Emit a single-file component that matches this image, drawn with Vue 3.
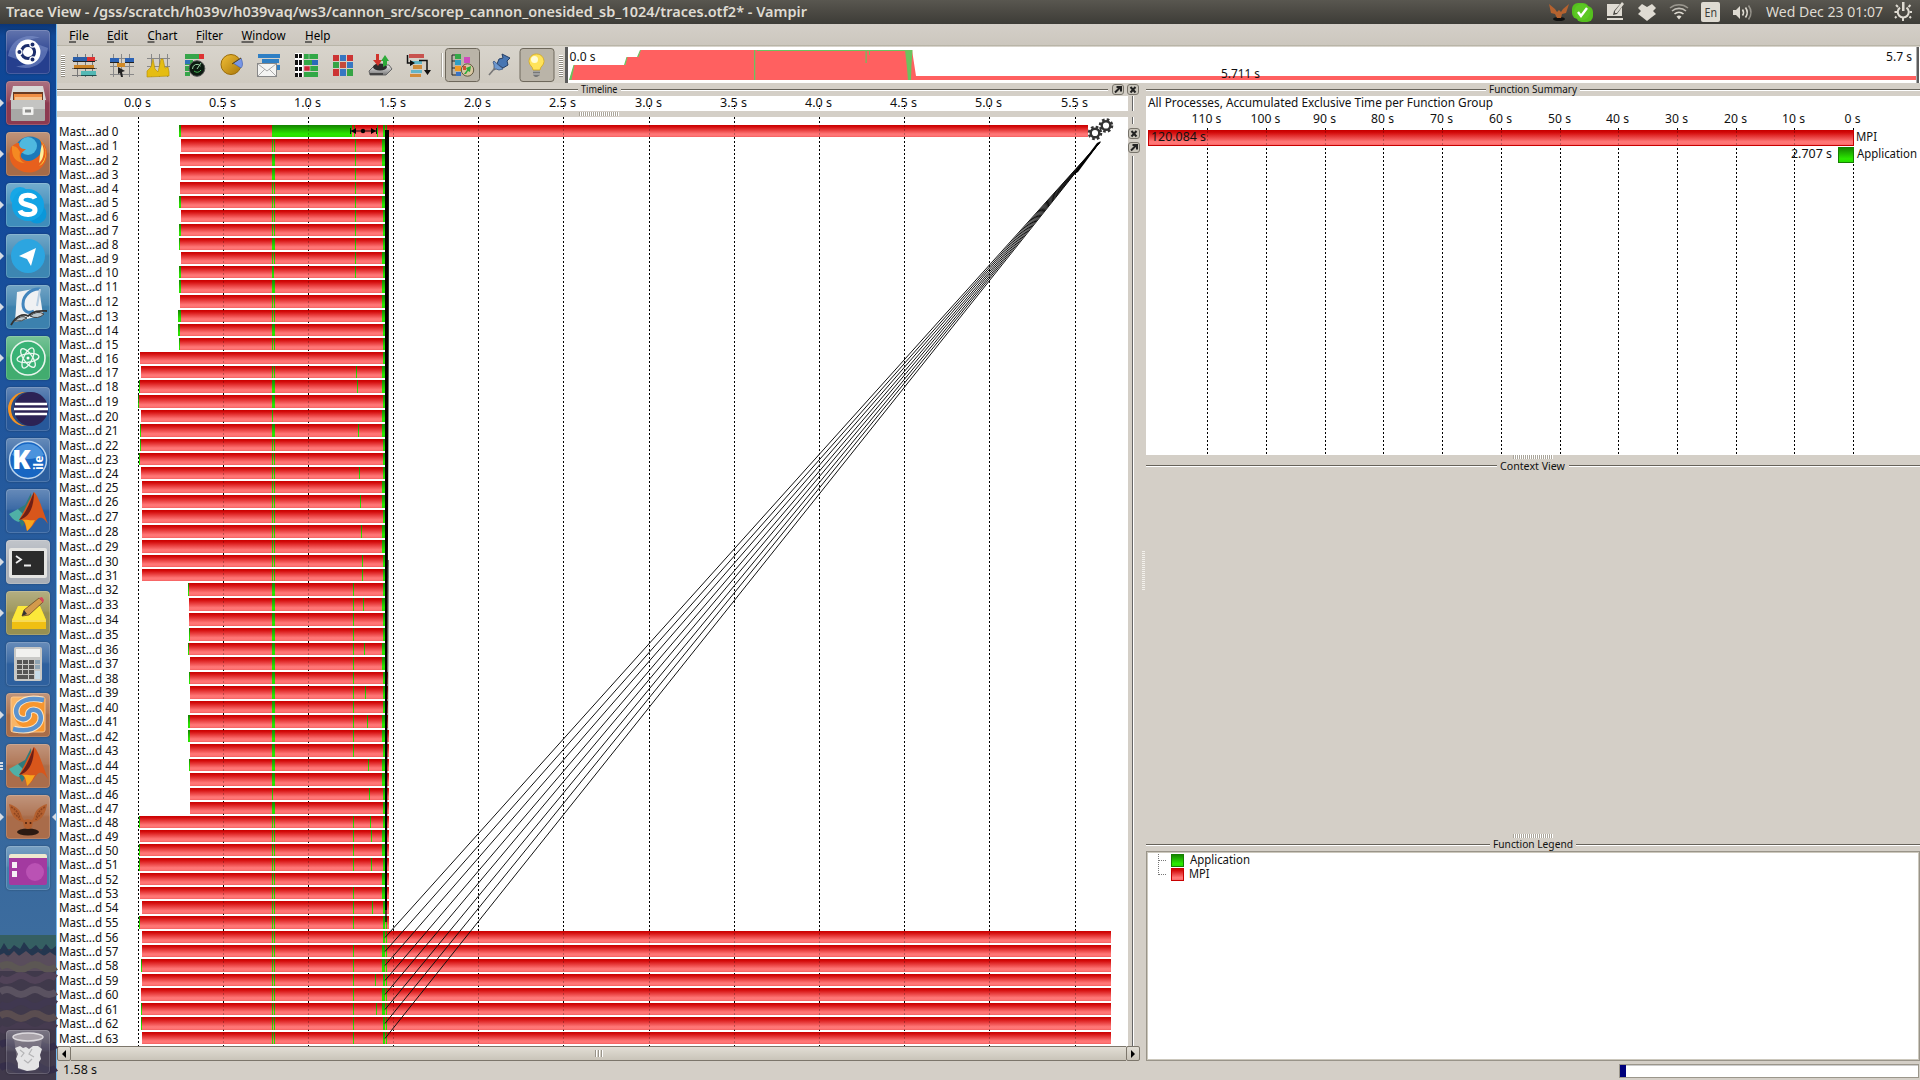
<script setup>
const tops = [
  125, 139, 154, 168, 182, 196, 210, 224, 238, 252, 266, 280, 295, 310, 324, 338,
  352, 366, 380, 395, 410, 424, 439, 453, 467, 481, 495, 510, 525, 540, 555, 569,
  583, 598, 613, 628, 643, 657, 672, 686, 701, 715, 730, 744, 759, 773, 788, 802,
  816, 830, 844, 858, 873, 887, 901, 916, 931, 945, 959, 974, 988, 1003, 1017, 1032, 1046
]
// where each bar begins, and how many leading pixels belong to the application
const starts = [
  [179, 2], [181], [180], [181], [180], [179, 2], [181], [179, 2], [179, 1], [181], [179, 2], [179, 2], [180], [178, 3], [178, 2], [179, 1],
  [140], [141], [139, 1], [138, 1], [141], [140, 1], [140, 1], [139, 1], [141], [142], [142], [142], [142], [142], [142], [142],
  [188, 1], [189], [189], [189, 1], [188, 1], [190], [189, 1], [190], [190], [188, 2], [188, 2], [190], [189, 1], [190], [190], [190],
  [139, 1], [140], [139, 1], [139, 1], [140], [140], [142], [139, 1], [142], [142], [141, 1], [142], [141], [141, 1], [141, 1], [142]
]
const solid = new Set([2, 3, 8, 11, 14, 18, 19, 21, 32, 33, 34, 35, 36, 37, 38, 39, 40, 41, 42, 43, 44, 45, 47])
const late = new Set([1, 2, 5, 9, 11, 12, 13, 17, 18, 20, 21, 25, 26, 28, 29, 33, 36, 37, 41, 42, 44, 45, 49, 50, 52, 53, 57, 58, 60, 61])
const thin = {
  17: 356, 18: 357, 21: 358, 24: 359, 26: 360, 28: 361, 30: 362, 31: 362, 33: 363, 36: 364, 39: 365,
  41: 367, 44: 368, 46: 369, 48: 370, 49: 371, 51: 371, 54: 372, 59: 375, 61: 376
}
const no353 = new Set([44, 45, 46, 47, 52, 56])
const rows = starts.map(([x, lead = 0], i) => {
  const end = i === 0 ? 1088 : i < 38 ? 386 : i < 42 ? 388 : i < 56 ? 389 : 1111
  const g = []
  if (lead) g.push([x, lead])
  if (i === 0) g.push([272, 80], [354, 1], [377, 1], [383, 2], [386, 1])
  else {
    if (solid.has(i)) g.push([272, 3])
    else if (i === 10) g.push([272, 2])
    else if (i === 20 || i === 46) g.push([272, 1])
    else if (i !== 16) g.push([272, 1], [274, 1])
    if (i < 11) g.push([355, 1])
    if (i > 31 && !no353.has(i)) g.push([353, 1])
    if (thin[i]) g.push([thin[i], 1])
    g.push(late.has(i) ? [382, 3] : [383, 2])
    if (i > 54) g.push([386, 1])
  }
  return { i, x, end, y: tops[i], h: tops[i + 1] - tops[i] - 2, g, name: i < 10 ? `Mast...ad ${i}` : `Mast...d ${i}` }
})
const grid = [138, 223, 308, 393, 478, 563, 649, 734, 819, 904, 989, 1075].map((x, i) => ({ x, label: `${(i / 2).toFixed(1)} s` }))
const sumGrid = Array.from({ length: 12 }, (_, i) => ({ x: Math.round(1853 - 58.7 * i), label: `${i * 10} s` }))
const messages = rows.slice(56)
const menus = [['File', 69, 20], ['Edit', 107, 21], ['Chart', 147.5, 30], ['Filter', 196, 27], ['Window', 241.5, 44], ['Help', 305, 25.5]]
</script>

<template>
  <div class="desktop">
    <header class="titlebar">
      <svg width="1920" height="24" viewBox="0 0 1920 24">
        <text x="6" y="17" class="wt" textLength="801" lengthAdjust="spacingAndGlyphs">Trace View - /gss/scratch/h039v/h039vaq/ws3/cannon_src/scorep_cannon_onesided_sb_1024/traces.otf2* - Vampir</text>
        <g>
          <ellipse cx="1559" cy="19" rx="6" ry="2" fill="#111" />
          <path d="M1549 4l6 5 2 3 2-2 2 2 2-3 6-5-3 9-4 1-1 4-4 0-2-4-4-1z" fill="#b5622f" />
        </g>
        <rect x="1572" y="3" width="17" height="16" rx="6" fill="#55c01e" />
        <rect x="1576" y="6" width="17" height="16" rx="6" fill="#55c01e" />
        <circle cx="1582" cy="12" r="8" fill="#5cc824" />
        <path d="M1578 12l3 4 6-8" fill="none" stroke="#fff" stroke-width="2.4" />
        <g fill="#dfdbd2">
          <path d="M1607 4h13l-6 7-1 4 4-1 5-7v9h-15z" />
          <path d="M1622 2l2 2-7 9-2 0 0-2zM1607 18h16v2h-16z" />
          <path d="M1642 4l5 3 5-3 4 4-3 3 3 3-4 3-5 4-5-4-4-3 3-3-3-3z" />
          <path d="M1676.500 16.500a4 4 0 0 1 5 0l-2.500 3z" />
          <rect x="1701" y="2" width="19" height="20" rx="2" />
          <path d="M1733 10h3l4-4v13l-4-4h-3z" />
          <path d="M1902 2h2.500v9h-2.500z" />
        </g>
        <g fill="none" stroke="#dfdbd2" stroke-width="1.600">
          <path d="M1674.500 14a7 7 0 0 1 9 0" />
          <path d="M1672 11a10.500 10.500 0 0 1 14 0" opacity=".8" />
          <path d="M1670 8a14 14 0 0 1 18 0" opacity=".5" />
          <path d="M1742.500 9.500q2 3 0 6M1745.500 7.500q3.500 5 0 10" />
          <path d="M1748.500 5.500q5 7 0 14" opacity=".5" />
          <path d="M1900 7.600a5.500 5.500 0 1 0 6.500 0" stroke-width="2" />
          <path d="M1903 18v3M1896.500 16.500l-1.500 1.500M1909.500 16.500l1.500 1.500M1897 12h-2.500M1909.500 12h2.500M1898 7l-2-2M1908.500 7l2-2" stroke-width="2" />
        </g>
        <text x="1704.500" y="17" font-size="13" fill="#3c3b37" textLength="12.500" lengthAdjust="spacingAndGlyphs">En</text>
        <text x="1766" y="17" font-size="14.500" fill="#dfdbd2" textLength="117" lengthAdjust="spacingAndGlyphs">Wed Dec 23 01:07</text>
      </svg>
    </header>

    <div class="below">
      <nav class="launcher">
        <div class="tile" style="--c: #263f8e">
          <svg viewBox="0 0 44 44">
            <path d="M2 26C4 10 20 2 34 8 22 8 12 14 13 30M42 18C40 34 24 42 10 36 22 36 32 30 31 14" fill="#7f93cc" opacity=".55" />
            <circle cx="22" cy="22" r="12.500" fill="#fff" />
            <circle cx="22" cy="22" r="6.600" fill="none" stroke="#1c2d6b" stroke-width="3" />
            <g fill="#1c2d6b" stroke="#fff" stroke-width="1.200"><circle cx="13.400" cy="22" r="2.600" /><circle cx="26.500" cy="14.500" r="2.600" /><circle cx="26.500" cy="29.500" r="2.600" /></g>
          </svg>
        </div>
        <div class="tile run" style="--c: #8c3a50">
          <svg viewBox="0 0 44 44">
            <path d="M7 5h30l3 14H4z" fill="#d9d9d7" /><path d="M7 11h30v9H7z" fill="#6a3a22" />
            <path d="M8 13h28v7H8z" fill="#ef8e45" /><path d="M9 16h27v3H9z" fill="#f6c08a" />
            <rect x="5" y="19" width="34" height="21" rx="1" fill="#a8a8a6" /><rect x="5" y="19" width="34" height="9" fill="#c4c4c2" />
            <rect x="16.500" y="26" width="11" height="8" rx="1" fill="#f2f2f0" /><rect x="19" y="28.500" width="6" height="3" fill="#8a8a88" />
          </svg>
        </div>
        <div class="tile run" style="--c: #a66b48">
          <svg viewBox="0 0 44 44">
            <circle cx="24" cy="20" r="15.500" fill="#1c79b8" /><circle cx="22" cy="14" r="9" fill="#4fb9df" />
            <path d="M5 15c3-2 4-4 8-4 0 4 2 6 7 6-3 3-6 4-5 8 3 5 10 5 15 1 6-3 7-12 4-18 9 6 9 20 2 27-10 10-26 5-31-5-2-5-2-10 0-15z" fill="#e7601d" />
            <path d="M34 8c8 8 7 20-1 26 9-3 9-20 1-26z" fill="#ffd33a" /><path d="M36 12c3 6 2 15-3 19 1-6 1-12 3-19z" fill="#fff09a" />
            <path d="M6 14c4 0 6 2 8 6-1 6 0 9 5 11-8 0-14-5-13-17z" fill="#f58a22" />
          </svg>
        </div>
        <div class="tile run" style="--c: #3f8dbb">
          <svg viewBox="0 0 44 44">
            <circle cx="14" cy="14" r="10" fill="#17a7e6" /><circle cx="31" cy="31" r="9.500" fill="#0a97da" /><circle cx="22" cy="22" r="16" fill="#12a3e4" />
            <path d="M29 15.500c-2-4-13-5-14 1-1 7 14 4 14 10.500 0 6-13 6-15 .5" fill="none" stroke="#fff" stroke-width="5" />
          </svg>
        </div>
        <div class="tile run" style="--c: #3d86b2">
          <svg viewBox="0 0 44 44"><circle cx="22" cy="22" r="17" fill="#2ca5e0" /><path d="M30 14l-17 8 8 3 4 7z" fill="#fff" /></svg>
        </div>
        <div class="tile run" style="--c: #3c81ae">
          <svg viewBox="0 0 44 44">
            <path d="M11 7l22-4 4 27-28 7z" fill="#eff1f3" />
            <path d="M34 4c-8-1-17 6-17 15 0 8 6 10 11 7" fill="none" stroke="#4285bd" stroke-width="3" /><path d="M34 4l-3 17" stroke="#b9cfe2" stroke-width="2" />
            <path d="M5 40c5-9 12-12 17-9 7-6 12-5 19-5" fill="none" stroke="#333" stroke-width="1.800" /><path d="M9 36q6-7 12-3-5 4-12 3zM24 31q7-6 14-2-6 6-14 2z" fill="#bbc6cc" stroke="#444" />
          </svg>
        </div>
        <div class="tile run" style="--c: #42ac6f">
          <svg viewBox="0 0 44 44">
            <circle cx="22" cy="22" r="17" fill="#39b275" stroke="#e8f5ec" stroke-width="1.600" />
            <g fill="none" stroke="#eaf7ee" stroke-width="1.300"><ellipse cx="22" cy="22" rx="11" ry="4.300" transform="rotate(-8 22 22)" /><ellipse cx="22" cy="22" rx="11" ry="4.300" transform="rotate(54 22 22)" /><ellipse cx="22" cy="22" rx="11" ry="4.300" transform="rotate(115 22 22)" /></g>
            <circle cx="22" cy="22" r="1.500" fill="#fff" />
          </svg>
        </div>
        <div class="tile" style="--c: #27589a">
          <svg viewBox="0 0 44 44">
            <circle cx="19" cy="22" r="17" fill="#f79421" /><circle cx="22" cy="22" r="17" fill="#2a4b80" /><circle cx="25" cy="22" r="17" fill="#2c2255" />
            <path d="M9 17h32M8 22h34M9 27h32" stroke="#fff" stroke-width="2.400" />
          </svg>
        </div>
        <div class="tile" style="--c: #2c5f9f">
          <svg viewBox="0 0 44 44">
            <circle cx="22" cy="22" r="18.500" fill="#1766c2" stroke="#bcd5ee" stroke-width="1.500" /><path d="M6 17a17 17 0 0 1 32 0q-16 8-32 0z" fill="#4b93dd" />
            <text x="6" y="31" font-size="27" font-weight="900" fill="#fff">K</text><text transform="translate(37 32) rotate(-90)" font-size="12" font-weight="700" fill="#fff">ile</text>
          </svg>
        </div>
        <div class="tile" style="--c: #2c5e9e">
          <svg viewBox="0 0 44 44"><path d="M3 25l9-5 8 6-5 7q-6 1-12-8z" fill="#4fb0a6" /><path d="M12 20l7-4 6-12 1 20-10 14-3-6 6-5z" fill="#2f7a7b" /><path d="M28 3c-5 8-8 16-15 28 5-2 6 4 8 11 6-4 9-12 12-13 4-1 6 2 9 6C37 23 33 7 28 3z" fill="#d8561b" /><path d="M28 3c-4 9-6 18-15 28 8-2 15-9 15-28z" fill="#6e1f16" /><path d="M16 31c3 0 4 5 5 11 5-4 6-8 8-11-5 1-8-1-13 0z" fill="#f7a51d" /></svg>
        </div>
        <div class="tile run" style="--c: #a9aeb6">
          <svg viewBox="0 0 44 44"><rect x="3" y="8" width="38" height="30" rx="2" fill="#e4e4e2" /><rect x="6" y="11" width="32" height="24" fill="#2b2b2b" /><path d="M10 16l5 3.500-5 3.500M18 25.500h7" fill="none" stroke="#eee" stroke-width="1.800" /></svg>
        </div>
        <div class="tile run" style="--c: #979052">
          <svg viewBox="0 0 44 44"><path d="M6 29l6-14h22l6 14v9H6z" fill="#f0bf13" /><path d="M6 29l6-14h22l6 14z" fill="#fce83a" /><path d="M6 30h34" stroke="#fff59a" /><path d="M16 25l2-6L33 7l4 4-14 13z" fill="#d39a4c" stroke="#6b4a23" stroke-width=".8" /><path d="M33 7l3-1 2 3-1 3z" fill="#d7465a" /><path d="M16 25l2-6 3 4z" fill="#333" /></svg>
        </div>
        <div class="tile" style="--c: #2e609e">
          <svg viewBox="0 0 44 44"><rect x="8" y="5" width="28" height="34" rx="2" fill="#c8c8c6" /><rect x="10" y="7" width="24" height="8" fill="#f1f1ef" /><g fill="#555"><rect v-for="k in 9" :key="k" :x="11 + ((k - 1) % 3) * 6" :y="18 + Math.floor((k - 1) / 3) * 5" width="5" height="4" /><rect x="11" y="33" width="11" height="4" /><rect x="23" y="33" width="5" height="4" /></g><path d="M29 18h5v4h-5zM29 23h5v4h-5z" fill="#8fa5b5" /><path d="M29 29h5v8h-5z" fill="#c7dbe8" /></svg>
        </div>
        <div class="tile run" style="--c: #a86d49">
          <svg viewBox="0 0 44 44"><rect x="5" y="4" width="34" height="35" rx="2" fill="#f6962f" stroke="#f8c48b" /><path d="M5 4h11C4 12 6 30 17 34c-6 1-9 3-8 5H5z" fill="#fbc98c" opacity=".6" /><g fill="none" stroke="#fbe3c2" stroke-width="6.500"><path d="M8 36c8 2 18 2 24-4 5-6 3-14-3-15-5-1-8 3-6 6" /><path d="M37 7c-9-2-18-2-24 4-5 6-3 14 3 15 5 1 8-3 6-6" /></g><g fill="none" stroke="#5b93cf" stroke-width="4.500"><path d="M7 36c9 2 19 2 25-4 5-6 3-14-3-15-5-1-8 3-6 6" /><path d="M38 7c-10-2-19-2-25 4-5 6-3 14 3 15 5 1 8-3 6-6" /></g></svg>
        </div>
        <div class="tile run many" style="--c: #aa6d4b">
          <svg viewBox="0 0 44 44"><path d="M3 25l9-5 8 6-5 7q-6 1-12-8z" fill="#4fb0a6" /><path d="M12 20l7-4 6-12 1 20-10 14-3-6 6-5z" fill="#2f7a7b" /><path d="M28 3c-5 8-8 16-15 28 5-2 6 4 8 11 6-4 9-12 12-13 4-1 6 2 9 6C37 23 33 7 28 3z" fill="#d8561b" /><path d="M28 3c-4 9-6 18-15 28 8-2 15-9 15-28z" fill="#6e1f16" /><path d="M16 31c3 0 4 5 5 11 5-4 6-8 8-11-5 1-8-1-13 0z" fill="#f7a51d" /></svg>
        </div>
        <div class="tile run focus" style="--c: #a96c4a">
          <svg viewBox="0 0 44 44"><ellipse cx="22" cy="37" rx="11" ry="3.500" fill="#2b1a12" /><path d="M3 9c7 2 12 6 13 13l2 3 4-1 4 1 2-3c1-7 6-11 13-13-1 8-4 14-10 17l-4 1-1 5q-4 4-8 0l-1-5-4-1C7 23 4 17 3 9z" fill="#b4602f" /><path d="M5 12q8 4 9 13M39 12q-8 4-9 13M8 18l5 5M36 18l-5 5" stroke="#8d4520" stroke-dasharray="2 1" stroke-width="1.500" fill="none" /><circle cx="20" cy="28" r="1" fill="#4a1f0c" /><circle cx="24.500" cy="28" r="1" fill="#4a1f0c" /></svg>
        </div>
        <div class="tile" style="--c: #457cab">
          <svg viewBox="0 0 44 44"><rect x="3" y="8" width="38" height="31" rx="2" fill="#a33aa0" /><circle cx="29" cy="26" r="9" fill="#c963c2" opacity=".6" /><path d="M3 12V10q0-2 2-2h34q2 0 2 2v2z" fill="#eee9cf" /><path d="M6 16h5v6H6zM6 25h5v6H6z" fill="#f5f0f5" /></svg>
        </div>
        <div class="tile trash">
          <svg viewBox="0 0 44 44"><path d="M8 8h28l-4 31q-10 3-20 0z" fill="#8e8791" opacity=".6" /><ellipse cx="22" cy="7" rx="15" ry="4" fill="#a9a3aa" stroke="#dedbdf" stroke-width="1.500" /><path d="M9 18l5-2 3 2 3-1 3 2 4-3 5 0 4 3-2 6 1 4-2 3v5l-4 3-8 1-9-3v-5l-2-4 2-5z" fill="#e4e4e5" /><path d="M14 20l4 3-3 4M26 19l-3 5 5 3M18 30l4 3 4-4" stroke="#b4b4b6" fill="none" stroke-width="1.200" /></svg>
        </div>
        <svg class="ground" width="56" height="145" viewBox="0 0 56 145">
          <rect width="56" height="145" fill="#40394b" />
          <path d="M0 0h56v14H0z" fill="#355f62" />
          <path d="M0 15l4-7 5 8 5-6 6 4 4-7 6 8 6-5 5 6 5-7 5 6 5-4v9H0z" fill="#24364f" />
          <path d="M0 20l4-2 4 4 6-6 5 5 7-5 6 5 6-4 6 4 6-4 6 4V36H0z" fill="#594d5c" />
          <g fill="none" stroke-width="7"><path d="M0 32q7-5 14 0t14 0 14 0 14 0" stroke="#5c5754" /><path d="M0 43q7 5 14 0t14 0 14 0 14 0" stroke="#514358" /><path d="M0 57q7-5 14 0t14 0 14 0 14 0" stroke="#5a5260" /><path d="M0 69q7 5 14 0t14 0 14 0 14 0" stroke="#403850" /><path d="M0 81q7-5 14 0t14 0 14 0 14 0" stroke="#5a4d50" /><path d="M0 93q7 5 14 0t14 0 14 0 14 0" stroke="#463b50" /><path d="M0 110q7-5 14 0t14 0 14 0 14 0M0 133q7-5 14 0t14 0 14 0 14 0" stroke="#352e4a" /></g>
        </svg>
      </nav>

      <main class="window">
        <div class="menubar">
          <svg width="1863" height="22" viewBox="57 24 1863 22">
            <g v-for="[m, x, w] in menus" :key="m">
              <text :x="x" y="40" font-size="12.500" :textLength="w" lengthAdjust="spacingAndGlyphs">{{ m }}</text>
              <rect :x="x" y="41.500" :width="m === 'Window' ? 12 : 7" height="1" />
            </g>
          </svg>
        </div>
        <div class="toolbar">
          <svg width="1863" height="37" viewBox="57 46 1863 37">
            <defs>
              <pattern id="hatch" width="4" height="2" patternUnits="userSpaceOnUse"><rect width="4" height="1" fill="#8e8a80" /><rect y="1" width="4" height="1" fill="#fff" /></pattern>
              <linearGradient id="gold" x1="0" y1="0" x2="1" y2="1"><stop offset="0" stop-color="#f2bf38" /><stop offset="1" stop-color="#a87708" /></linearGradient>
              <linearGradient id="steel" x1="0" y1="0" x2="0" y2="1"><stop offset="0" stop-color="#eee" /><stop offset="1" stop-color="#777" /></linearGradient>
            </defs>
            <rect x="61" y="55" width="4" height="22" fill="url(#hatch)" /><rect x="559" y="55" width="4" height="22" fill="url(#hatch)" />
            <!-- master timeline -->
            <g><path d="M77.500 54v23M85.500 54v23M92.500 54v23M72 60.500h25M72 68.500h25M72 75.500h25" stroke="#777" fill="none" /><path d="M73 57h21v4H73z" fill="#2c5fa8" /><path d="M87 57h8v4h-8z" fill="#d33" /><path d="M73 61h22v1H73z" fill="#222" /><path d="M74 65h20v3H74z" fill="#c98226" /><path d="M74 68h21v1H74z" fill="#3a2a14" /><path d="M81 71h15v4H81z" fill="#53b8b4" /><path d="M81 75h15v1H81z" fill="#1d4d4b" /></g>
            <!-- process timeline -->
            <g><path d="M113.500 54v23M121.500 54v23M129.500 54v23M110 58.500h24M110 66.500h24M110 74.500h24" stroke="#888" fill="none" /><path d="M110 58h9v4h-9zM125 58h9v4h-9z" fill="#2c63b5" /><path d="M110 62h9v1h-9zM125 62h9v1h-9z" fill="#222" /><path d="M117 63h8v4h-8z" fill="#d08a28" /><path d="M118 67l7 4-3 1 1 5h-2l-1-4-2 1z" fill="#222" /></g>
            <!-- counter timeline -->
            <g><path d="M151.500 54v23M159.500 54v23M167.500 54v23M147 58.500h23M147 66.500h23" stroke="#888" fill="none" /><path d="M147 77V71l4-4 2-8 2 10 3 3 3-13 2 0 2 9 3-1 1 5v4z" fill="#e5bd12" stroke="#b18c00" stroke-width=".6" /></g>
            <!-- performance radar -->
            <g><path d="M185 54h19v5h-19zM185 60h8v5h-8zM185 66h5v5h-5zM185 72h5v4h-5z" fill="#36a54a" /><path d="M199 54h5v5h-5z" fill="#d33" /><path d="M185 60h5v4h-5z" fill="#2f72b8" /><circle cx="197" cy="68.500" r="7.800" fill="#0c1b10" stroke="#555" /><path d="M197 69l4-6M192.500 69a4.500 4.500 0 0 1 8-3" stroke="#9fd6a8" fill="none" /><path d="M194 71q4 3 7-1" stroke="#44b653" fill="none" /></g>
            <!-- function summary -->
            <g><circle cx="231" cy="64.500" r="10" fill="url(#gold)" stroke="#9a6b07" /><path d="M233 63l8-5q3 7 0 10z" fill="#7796e6" stroke="#4463b5" stroke-width=".7" /><path d="M232 64l9-6" stroke="#634500" /></g>
            <!-- message summary -->
            <g><path d="M258 54h22v4h-22zM262 59h17v4h-17zM262 65h18v5h-18z" fill="#2f7fc4" /><rect x="257.500" y="63.500" width="19" height="13" fill="#f4f4f2" stroke="#888" /><path d="M258 64l9 7 9-7M258 76l7-7M276 76l-7-7" fill="none" stroke="#aaa" /></g>
            <!-- process summary -->
            <g><path d="M295 53h8v24h-8z" fill="#fff" /><path d="M295 54h3v4h-3zM299 54h3v4h-3zM295 60h3v5h-3zM299 60h3v5h-3zM295 67h3v4h-3zM299 67h3v4h-3zM295 73h3v4h-3zM299 73h3v4h-3z" fill="#111" /><path d="M304 54h14v5h-14zM304 60h14v5h-14zM304 66h14v5h-14zM304 72h14v5h-14z" fill="#32a846" /><path d="M309 54v5M304 66h6v5h-6z" fill="#c23" stroke="#ddd" stroke-width=".5" /><path d="M312 60h6v5h-6z" fill="#2a6ab8" /></g>
            <!-- communication matrix -->
            <g><path d="M333 55h6v6h-6zM347 55h6v6h-6zM333 69h6v7h-6z" fill="#cc3434" /><path d="M340 55h6v6h-6zM347 62h6v6h-6zM340 69h6v7h-6z" fill="#3676c2" /><path d="M333 62h6v6h-6zM347 69h6v7h-6z" fill="#35a445" /><path d="M340 62h6v6h-6z" fill="#c44a3c" /></g>
            <!-- I/O summary -->
            <g><path d="M369 71l6-6h14l3 4-6 6h-16z" fill="url(#steel)" stroke="#666" /><ellipse cx="380" cy="67" rx="7" ry="3.500" fill="#2c2c2c" /><path d="M376 54v6h-3l5 6 4-6h-3v-6z" fill="#d0342c" /><path d="M383 67v-6h-2l4-6 4 6h-2v4z" fill="#2eab3a" /><path d="M370 73h13v2h-13z" fill="#444" /></g>
            <!-- call tree -->
            <g><path d="M409 54h15v4h-15z" fill="#c8524e" /><path d="M410 61h12v3h-12z" fill="#61b5c6" /><path d="M413 65h9v4h-9z" fill="#cf8c3c" /><path d="M411 70h11v3h-11z" fill="#62b5c9" /><path d="M410 74h11v3h-11z" fill="#d28c3a" /><path d="M407.500 55v8h5M419 60.500h8v11" stroke="#111" fill="none" stroke-width="1.500" /><path d="M410 60l5 3-5 3zM424 70h7l-3.500 5z" fill="#111" /></g>
            <path d="M441.500 53v24" stroke="#aaa69c" /><path d="M442.500 53v24" stroke="#fff" />
            <rect x="445.500" y="48.500" width="34" height="33" rx="3" fill="#bab4a8" stroke="#6e685c" />
            <g><path d="M455 55h-3v20h4M452 61h4M452 68h4" stroke="#222" fill="none" /><path d="M455 54h6v5h-6z" fill="#33a847" /><path d="M455 60h6v5h-6z" fill="#2f9ec2" /><path d="M455 66h6v5h-6z" fill="#ef9b26" /><path d="M456 72h5v4h-5z" fill="#3a72c3" /><path d="M464 57h6v6h-6z" fill="#d04bbd" /><circle cx="467.500" cy="70" r="6.200" fill="#d9c7a2" stroke="#5f563e" /><path d="M464 74l3-4-1-2 5-2-1 6-2-1-2 3z" fill="#2ba838" /><path d="M463 66h3v4h-3z" fill="#c53" /></g>
            <g><path d="M502 54l8 4-3 3 1 4-5 3-6-4 2-5 4-1z" fill="#4876b2" stroke="#263f66" /><path d="M494 61l9 8-4 1-3-1-2 1 0-5-1-3z" fill="#6d98cf" stroke="#2f4b76" stroke-width=".7" /><path d="M495 68l-6 7" stroke="#777" stroke-width="1.600" /></g>
            <rect x="520" y="48.500" width="34" height="33" rx="3" fill="#bab4a8" stroke="#6e685c" />
            <g><path d="M533 69h7v6l-3 2h-2l-2-2z" fill="#777" /><path d="M533 71h7M533 74h7" stroke="#ccc" /><path d="M536.500 54c-5 0-7.500 4-7.500 7.500 0 4 4 5 4 8.500h7c0-3.500 4-4.500 4-8.500 0-3.500-2.500-7.500-7.500-7.500z" fill="#ffe35a" stroke="#d3a81c" stroke-width=".8" /><circle cx="534.500" cy="59.500" r="3.500" fill="#fffbd5" /></g>
            <!-- zoom overview -->
            <path d="M565 47h1355v36H565z" fill="#fff" /><path d="M565 47h3v36h-3zM1916.500 47h2.500v36h-2.500z" fill="#5c5c5c" />
            <path d="M569.500 80l4.500-15h51l2-8h11l2.500-7H912l4 26h1000v4z" fill="#ff6060" />
            <g fill="#6cc25e"><path d="M569 80l4.500-15h1l-3 15zM624 65l2.500-8h1l-2 8zM637 57l3-7h1l-2.500 7z" /><path d="M754 50h1.300v30H754zM757 50h152v1H757zM865.500 50h1.200v13h-1.200zM869 50h1v5h-1zM905 50h7.500l-1 15-.5 15h-3l-1-12z" /></g>
            <g class="t"><text x="569.500" y="61" textLength="26" lengthAdjust="spacingAndGlyphs">0.0 s</text><text x="1221" y="78" textLength="39" lengthAdjust="spacingAndGlyphs">5.711 s</text><text x="1886" y="61" textLength="26" lengthAdjust="spacingAndGlyphs">5.7 s</text></g>
          </svg>
        </div>

        <div class="docks">
          <section class="left">
            <div class="docktitle"><i class="lead"></i><svg width="37" height="13"><text x="0" y="10" textLength="36.500" lengthAdjust="spacingAndGlyphs">Timeline</text></svg><i></i>
              <svg width="30" height="13" viewBox="0 0 30 13"><g fill="#c9c5bb" stroke="#77736a"><rect x="1.500" y="1.500" width="11" height="10" rx="2.500" /><rect x="16.500" y="1.500" width="11" height="10" rx="2.500" /></g><path d="M4 9.500l5-5M5.500 4H10v4.500M19.500 4l5 5.500M24.500 4l-5 5.500" stroke="#222" stroke-width="2" fill="none" /></svg>
            </div>
            <div class="charts">
              <div class="plots">
                <svg class="ruler" width="1071" height="15" viewBox="57 96 1071 15">
                  <g v-for="g in grid" :key="g.x" class="t"><text :x="g.x - 0.5" y="107" text-anchor="middle" textLength="27" lengthAdjust="spacingAndGlyphs">{{ g.label }}</text><path :d="`M${g.x} 105h1v1h-1zM${g.x} 108h1v1h-1z`" /></g>
                </svg>
                <div class="split"><span class="grip"></span></div>
                <svg class="plot" width="1071" height="929" viewBox="57 117 1071 929">
                  <defs>
                    <linearGradient id="red" x1="0" y1="0" x2="0" y2="1"><stop offset="0" stop-color="#c80000" /><stop offset=".15" stop-color="#d40c0c" /><stop offset=".75" stop-color="#ff7777" /><stop offset=".88" stop-color="#ff7474" /><stop offset="1" stop-color="#f26060" /></linearGradient>
                    <linearGradient id="green" x1="0" y1="0" x2="0" y2="1"><stop offset="0" stop-color="#148000" /><stop offset=".75" stop-color="#2be800" /><stop offset="1" stop-color="#26dc00" /></linearGradient>
                  </defs>
                  <path v-for="g in grid" :key="g.x" :d="`M${g.x + 0.5} 117V1046`" class="grid" />
                  <g v-for="r in rows" :key="r.i" shape-rendering="crispEdges">
                    <rect :x="r.x" :y="r.y" :width="r.end - r.x" :height="r.h" fill="url(#red)" />
                    <rect v-for="([x, w], k) in r.g" :key="k" :x="x" :y="r.y" :width="w" :height="r.h" fill="url(#green)" />
                    <text class="t" x="59" :y="r.y + 11" textLength="59.500" lengthAdjust="spacingAndGlyphs">{{ r.name }}</text>
                  </g>
                  <path v-for="g in grid" :key="'o' + g.x" :d="`M${g.x + 0.5} 117V1046`" class="grid over" />
                  <path d="M385 130h4l-.2 200-1 260-.8 300v20h-2z" />
                  <path d="M385 908h2v14h-2z" opacity=".65" /><path d="M388 560l1 0-1 200z" opacity=".5" />
                  <path v-for="m in messages" :key="m.i" :d="`M385 ${m.y + 6.500}L1100 142`" stroke="#111" stroke-width="1" />
                  <path d="M1101 141l-4 2-24 32 5-3z" />
                  <path d="M351 131h25M350.500 128v6M376.500 128v6" stroke="#111" /><path d="M351 131l5-3v6zM376 131l-5-3v6z" /><circle cx="363" cy="131" r="2.200" />
                  <g fill="none" stroke="#333">
                    <circle cx="1095" cy="133" r="4.300" stroke-width="2.400" /><circle cx="1095" cy="133" r="6" stroke-width="2.600" stroke-dasharray="2.600 2.112" />
                    <circle cx="1106" cy="125.500" r="4.300" stroke-width="2.400" /><circle cx="1106" cy="125.500" r="6" stroke-width="2.600" stroke-dasharray="2.600 2.112" />
                  </g>
                </svg>
              </div>
              <svg width="18" height="950" viewBox="1128 96 18 950">
                <path d="M1132.500 96v15M1132.500 117v7M1132.500 156v890" stroke="#666" /><path d="M1133.500 96v15M1133.500 117v7M1133.500 156v890" stroke="#fff" />
                <g fill="#c9c5bb" stroke="#77736a"><rect x="1128.500" y="128.500" width="11" height="10" rx="2.500" /><rect x="1128.500" y="142.500" width="11" height="10" rx="2.500" /></g>
                <path d="M1131.500 131l5 5.500M1136.500 131l-5 5.500M1131 150.500l5-5M1132.500 145h4.500v4.500" stroke="#222" stroke-width="2" fill="none" />
                <path d="M1143.500 551v40" stroke="#f3f1ec" stroke-width="3" stroke-dasharray="1 1" />
              </svg>
            </div>
            <div class="scroll"><span class="btn"><svg width="6" height="8" viewBox="0 0 6 8"><path d="M5 0v8L1 4z" /></svg></span><span class="thumb"><u></u><u></u><u></u></span><span class="btn"><svg width="6" height="8" viewBox="0 0 6 8"><path d="M1 0v8l4-4z" /></svg></span></div>
          </section>

          <section class="right">
            <div class="docktitle"><i></i><svg width="88" height="13"><text x="0" y="10" textLength="88" lengthAdjust="spacingAndGlyphs">Function Summary</text></svg><i></i></div>
            <svg class="summary" width="774" height="359" viewBox="1146 96 774 359">
              <text class="t" x="1148" y="107" textLength="345" lengthAdjust="spacingAndGlyphs">All Processes, Accumulated Exclusive Time per Function Group</text>
              <g v-for="g in sumGrid" :key="g.x"><text class="t" :x="g.x - 0.5" y="123" text-anchor="middle">{{ g.label }}</text><path :d="`M${g.x + 0.5} 128V455`" class="grid" /></g>
              <rect x="1148.500" y="130.500" width="705" height="15" fill="url(#red)" stroke="#c80000" />
              <rect x="1838.500" y="147.500" width="15" height="15" fill="url(#green)" stroke="#148000" />
              <path v-for="g in sumGrid.slice(1)" :key="'s' + g.x" :d="`M${g.x + 0.5} 131V145`" class="grid over" />
              <g class="t"><text x="1151" y="141" textLength="55" lengthAdjust="spacingAndGlyphs">120.084 s</text><text x="1856" y="141" textLength="21" lengthAdjust="spacingAndGlyphs">MPI</text><text x="1791" y="158" textLength="41" lengthAdjust="spacingAndGlyphs">2.707 s</text><text x="1857" y="158" textLength="60" lengthAdjust="spacingAndGlyphs">Application</text></g>
            </svg>
            <div class="split small"><span class="grip"></span></div>
            <div class="docktitle"><i></i><svg width="66" height="13"><text x="0" y="10" textLength="65" lengthAdjust="spacingAndGlyphs">Context View</text></svg><i></i></div>
            <div class="context"></div>
            <div class="split small"><span class="grip"></span></div>
            <div class="docktitle"><i></i><svg width="80" height="13"><text x="0" y="10" textLength="80" lengthAdjust="spacingAndGlyphs">Function Legend</text></svg><i></i></div>
            <div class="legend">
              <svg width="771" height="60" viewBox="1148 853 771 60">
                <path d="M1158.500 854v21M1159 860.500h8M1159 874.500h8" stroke="#777" fill="none" stroke-dasharray="1 1" />
                <rect x="1171.500" y="854.500" width="12" height="12" fill="url(#green)" stroke="#148000" /><rect x="1171.500" y="868.500" width="12" height="12" fill="url(#red)" stroke="#c80000" />
                <g class="t"><text x="1190" y="864" textLength="60" lengthAdjust="spacingAndGlyphs">Application</text><text x="1189" y="878" textLength="20.500" lengthAdjust="spacingAndGlyphs">MPI</text></g>
              </svg>
            </div>
          </section>
        </div>

        <footer class="status"><svg width="60" height="19" viewBox="0 0 60 19"><text class="t" x="6" y="13" textLength="34" lengthAdjust="spacingAndGlyphs">1.58 s</text></svg><div class="progress"><span></span></div></footer>
      </main>
    </div>
  </div>
</template>

<style>
body { margin: 0; overflow: hidden; }
</style>

<style scoped>
.desktop { width: 1920px; height: 1080px; overflow: hidden; font-family: "Noto Sans", "Open Sans", sans-serif; font-size: 12.5px; color: #111; }
svg { display: block; flex: none; overflow: visible; }
.t { font-size: 12.2px; fill: #111; stroke: none; }
.grid { stroke: #000; stroke-dasharray: 2 2; }
.over { stroke-opacity: .25; }
.titlebar { height: 24px; background: linear-gradient(#595750, #4b4943 50%, #3d3c37); }
.wt { font-weight: 600; font-size: 14.5px; fill: #dfdbd2; }
.below { display: flex; height: 1056px; }
.launcher { position: relative; box-sizing: border-box; width: 57px; padding: 6px 0 6px 6px; display: flex; flex-direction: column; gap: 7px; background: linear-gradient(#0b3678, #0f4795 12px, #10479a 12%, #255a9d 45%, #3c6c9e 86%); border-right: 1px solid #78bdf0; }
.tile { position: relative; z-index: 1; width: 44px; height: 44px; flex: none; border-radius: 4px; background: linear-gradient(rgba(255,255,255,.28), rgba(255,255,255,.08) 45%, rgba(255,255,255,0) 50%), var(--c); box-shadow: inset 0 0 0 1px rgba(255,255,255,.16), 0 0 2px rgba(0,0,0,.35); }
.tile svg { width: 44px; height: 44px; }
.run::before { content: ""; position: absolute; left: -6px; top: 18px; border: 4px solid transparent; border-left-color: #d5dbe3; border-right: 0; }
.many::before { top: 18px; width: 3px; height: 8px; border: 0; background: repeating-linear-gradient(#d5dbe3 0 2px, transparent 2px 3px); }
.focus::after { content: ""; position: absolute; right: -6px; top: 18px; border: 4px solid transparent; border-right-color: #d5dbe3; border-left: 0; }
.trash { margin-top: auto; --c: rgba(80,75,95,.5); }
.ground { position: absolute; left: 0; bottom: 0; }
.window { width: 1863px; background: #d4cfc7; display: flex; flex-direction: column; }
.menubar { height: 21px; border-bottom: 1px solid #b9b5a8; background: linear-gradient(#d4cfc8, #ccc7be); }
.toolbar { height: 37px; background: linear-gradient(#d8d4cc, #cfcac0); }
.docks { display: flex; height: 978px; }
.left { width: 1089px; display: flex; flex-direction: column; }
.right { width: 774px; display: flex; flex-direction: column; }
.docktitle { height: 13px; display: flex; align-items: center; gap: 3px; }
.docktitle text { font-size: 11.2px; fill: #111; }
.docktitle i { flex: 1; height: 1px; background: #66625a; border-bottom: 1px solid #fff; }
.docktitle .lead { flex: none; width: 521px; }
.left .docktitle { padding-right: 5px; box-sizing: border-box; }
.charts { display: flex; height: 950px; }
.plots { width: 1071px; }
.ruler, .plot, .summary { background: #fff; }
.split { height: 6px; display: flex; justify-content: center; align-items: center; }
.split.small { height: 5px; }
.grip { width: 40px; height: 4px; background: repeating-linear-gradient(90deg, #aaa59a 0 1px, #fff 1px 2px); }
.split:not(.small) .grip { margin-left: 12px; }
.scroll { box-sizing: border-box; width: 1083px; height: 15px; display: flex; background: #d4cfc7; }
.btn, .thumb { box-sizing: border-box; border: 1px solid #7c766b; border-radius: 2px; background: linear-gradient(#e2ded5, #c9c4b9); display: flex; align-items: center; justify-content: center; }
.btn { width: 14px; }
.thumb { flex: 1; gap: 1px; border-left-width: 0; border-right-width: 0; border-radius: 0; }
.thumb u { width: 1px; height: 7px; background: #99948a; border-right: 1px solid #fff; }
.context { height: 361px; }
.legend { box-sizing: border-box; width: 774px; height: 210px; border: 1px solid #999489; background: #fff; box-shadow: inset 0 0 0 1px #ccc8bd; padding: 1px; }
.status { height: 19px; display: flex; justify-content: space-between; }
.progress { box-sizing: border-box; width: 300px; height: 14px; margin: 3px 1px 0 0; border: 1px solid #9b968b; background: #fff; box-shadow: inset 0 1px 0 #ccc; display: flex; }
.progress span { width: 6px; background: #00007c; }
</style>
